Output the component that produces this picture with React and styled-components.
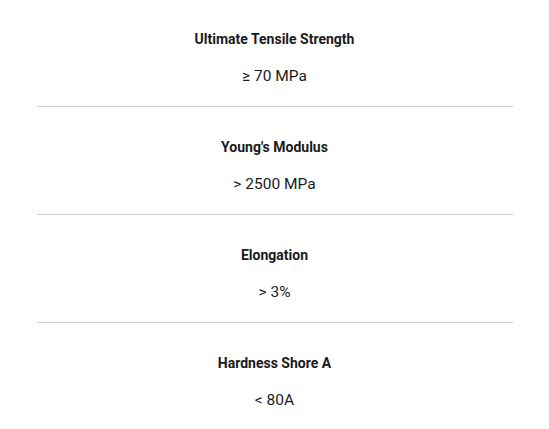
import React from 'react';
import styled, { createGlobalStyle } from 'styled-components';

const GlobalStyle = createGlobalStyle`
  body {
    margin: 0;
    background: #fff;
    font-family: Roboto, "Liberation Sans", sans-serif;
    color: #1a1a1a;
  }
`;

const SpecList = styled.div`
  width: 476px;
  margin: 0 auto;
  display: flex;
  flex-direction: column;
`;

const SpecItem = styled.div`
  display: flex;
  flex-direction: column;
  align-items: center;
  gap: 20px;
  padding: 32px 0 21px;
  border-bottom: ${(props) => (props.last ? 'none' : '1px solid #cfcfcf')};

  &:first-child {
    padding-top: 31px;
  }
`;

const SpecTitle = styled.div`
  font-size: 14px;
  line-height: 16px;
  font-weight: 700;
`;

const SpecValue = styled.div`
  font-size: 15.5px;
  line-height: 18px;
  font-weight: 400;
`;

const specs = [
  { title: 'Ultimate Tensile Strength', value: '≥ 70 MPa' },
  { title: "Young's Modulus", value: '> 2500 MPa' },
  { title: 'Elongation', value: '> 3%' },
  { title: 'Hardness Shore A', value: '< 80A' },
];

const App = () => (
  <>
    <GlobalStyle />
    <SpecList>
      {specs.map((spec, i) => (
        <SpecItem key={spec.title} last={i === specs.length - 1}>
          <SpecTitle>{spec.title}</SpecTitle>
          <SpecValue>{spec.value}</SpecValue>
        </SpecItem>
      ))}
    </SpecList>
  </>
);

export default App;
